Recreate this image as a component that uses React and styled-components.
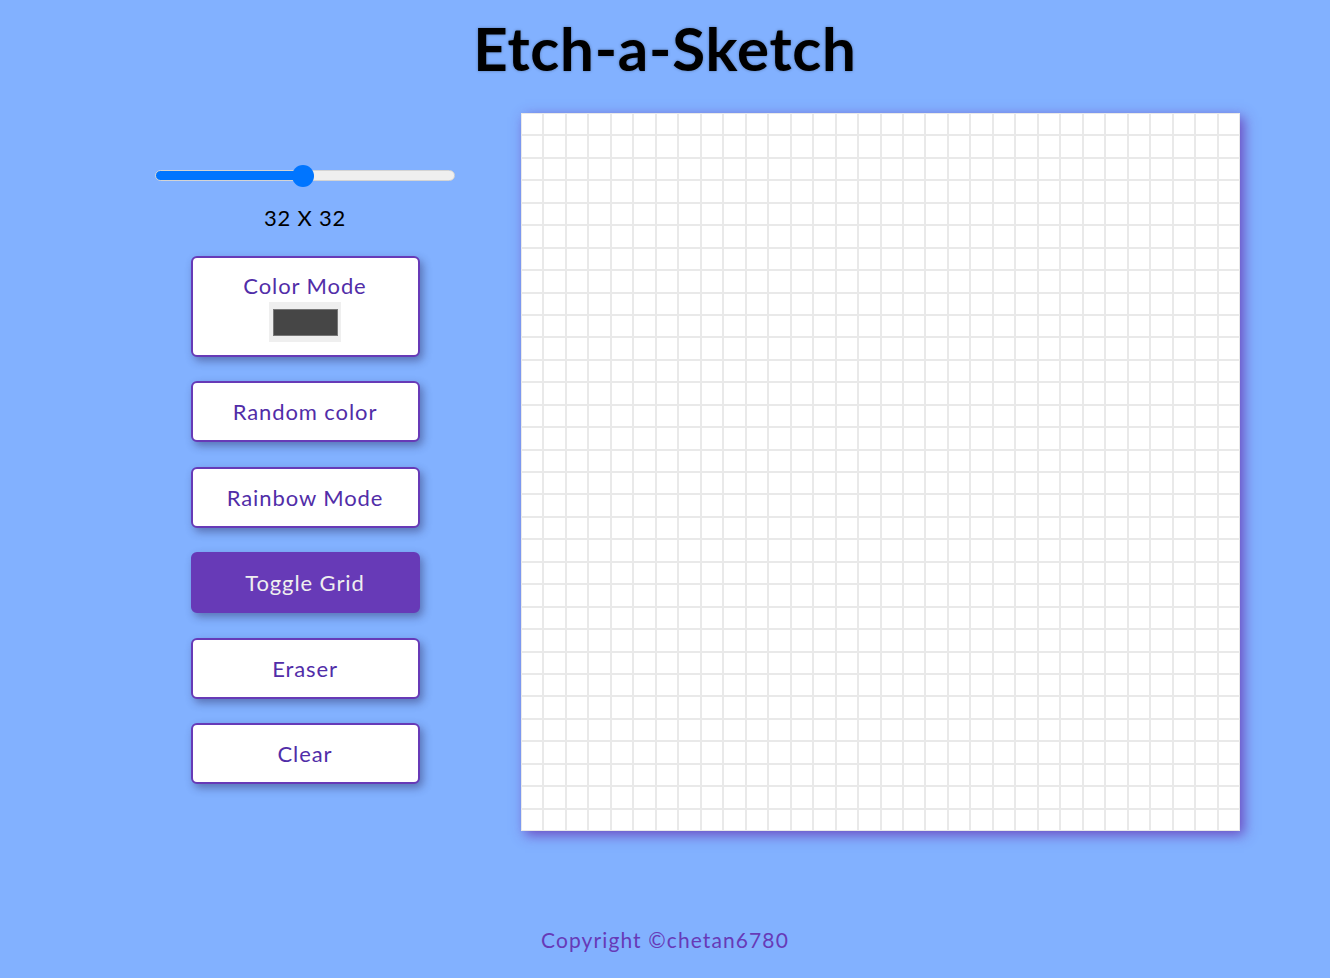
import React, { useState } from "react";
import styled, { createGlobalStyle } from "styled-components";

const GlobalStyle = createGlobalStyle`
  * { box-sizing: border-box; }
  body {
    margin: 0;
    background: #82b1ff;
    font-family: Lato, "Noto Sans", sans-serif;
  }
`;

const Page = styled.div`
  width: 1330px;
  min-height: 978px;
`;

const Title = styled.h1`
  margin: 0;
  height: 113px;
  padding-top: 12px;
  text-align: center;
  font-size: 60px;
  line-height: 72px;
  font-weight: 700;
  letter-spacing: 0.8px;
  color: #000;
  text-shadow: 0 0 3px rgba(0, 0, 0, 0.35);
`;

const Main = styled.main`
  display: flex;
  align-items: flex-start;
  padding-left: 155px;
  gap: 66px;
`;

const Controls = styled.div`
  width: 300px;
  padding-top: 57px;
  display: flex;
  flex-direction: column;
  align-items: center;
`;

const Slider = styled.input`
  -webkit-appearance: none;
  appearance: none;
  width: 300px;
  height: 11px;
  margin: 0;
  border-radius: 6px;
  border: 1px solid #d4d4d4;
  outline: none;
  background: ${(p) =>
    `linear-gradient(to right, #0075ff 0%, #0075ff ${p.$pct}%, #efefef ${p.$pct}%, #efefef 100%)`};

  &::-webkit-slider-thumb {
    -webkit-appearance: none;
    width: 22px;
    height: 22px;
    border-radius: 50%;
    background: #0075ff;
    border: none;
  }
`;

const SizeLabel = styled.p`
  margin: 24px 0 0;
  font-size: 22px;
  line-height: 26px;
  letter-spacing: 0.8px;
  color: #000;
`;

const Buttons = styled.div`
  display: flex;
  flex-direction: column;
  gap: 24.4px;
  margin-top: 25px;
`;

const Button = styled.button`
  width: 229px;
  height: ${(p) => (p.$tall ? "101px" : "61px")};
  display: flex;
  flex-direction: column;
  align-items: center;
  justify-content: ${(p) => (p.$tall ? "flex-start" : "center")};
  padding: ${(p) => (p.$tall ? "14px 0 0" : "0")};
  gap: 3px;
  border: 2px solid #673ab7;
  border-radius: 6px;
  background: ${(p) => (p.$active ? "#673ab7" : "#fff")};
  color: ${(p) => (p.$active ? "#efefef" : "#512da8")};
  font-family: Lato, "Noto Sans", sans-serif;
  font-size: 22px;
  letter-spacing: 0.9px;
  box-shadow: 3px 4px 9px rgba(40, 40, 90, 0.45);
  cursor: pointer;
`;

const Swatch = styled.span`
  width: 72px;
  height: 40px;
  background: #efefef;
  display: flex;
  align-items: center;
  justify-content: center;
`;

const SwatchColor = styled.span`
  width: 65px;
  height: 27px;
  background: ${(p) => p.$color};
  border: 1px solid #777;
`;

const Board = styled.div`
  width: 719px;
  height: 718px;
  display: grid;
  grid-template-columns: repeat(${(p) => p.$size}, 1fr);
  grid-template-rows: repeat(${(p) => p.$size}, 1fr);
  background: #fff;
  box-shadow: 4px 4px 12px rgba(103, 58, 183, 0.85);
`;

const Cell = styled.div`
  border: 1px solid #e9e9e9;
  background: #fff;
`;

const Footer = styled.footer`
  margin-top: 96px;
  text-align: center;
  font-size: 21px;
  line-height: 26px;
  letter-spacing: 1.1px;
  color: #673ab7;
`;

export default function App() {
  const [size, setSize] = useState(32);
  const pct = ((size - 1) / 63) * 100;
  const cells = Array.from({ length: size * size });

  return (
    <Page>
      <GlobalStyle />
      <Title>Etch-a-Sketch</Title>
      <Main>
        <Controls>
          <Slider
            type="range"
            min="1"
            max="64"
            value={size}
            $pct={pct}
            onChange={(e) => setSize(Number(e.target.value))}
          />
          <SizeLabel>
            {size} X {size}
          </SizeLabel>
          <Buttons>
            <Button $tall>
              Color Mode
              <Swatch>
                <SwatchColor $color="#464646" />
              </Swatch>
            </Button>
            <Button>Random color</Button>
            <Button>Rainbow Mode</Button>
            <Button $active>Toggle Grid</Button>
            <Button>Eraser</Button>
            <Button>Clear</Button>
          </Buttons>
        </Controls>
        <Board $size={size}>
          {cells.map((_, i) => (
            <Cell key={i} />
          ))}
        </Board>
      </Main>
      <Footer>Copyright ©chetan6780</Footer>
    </Page>
  );
}
